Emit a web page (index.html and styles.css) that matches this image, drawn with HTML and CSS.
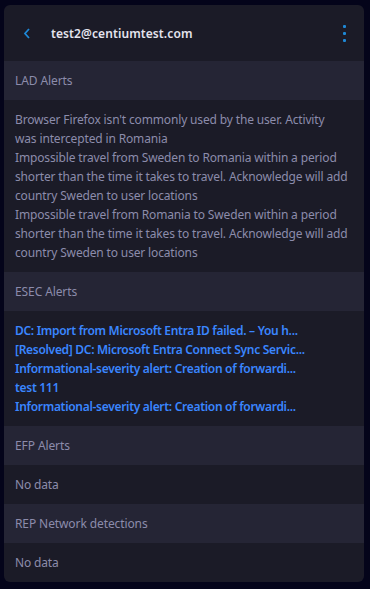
FILE: index.html
```html
<!DOCTYPE html>
<html lang="en">
<head>
  <meta charset="UTF-8">
  <title>test2@centiumtest.com</title>
  <meta name="viewport" content="width=device-width, initial-scale=1.0">
  <link rel="stylesheet" href="styles.css">
</head>
<body>
  <div class="painel">
    <header class="topo">
      <button class="voltar" aria-label="Back">
        <svg width="8" height="11" viewBox="0 0 8 11"><path d="M6 1 L2 5.5 L6 10" fill="none" stroke="#1e88d6" stroke-width="1.8"/></svg>
      </button>
      <h1>test2@centiumtest.com</h1>
      <button class="mais" aria-label="More">
        <span></span><span></span><span></span>
      </button>
    </header>

    <section class="secao">
      <h2>LAD Alerts</h2>
      <div class="conteudo">
        <p>Browser Firefox isn't commonly used by the user. Activity was intercepted in Romania</p>
        <p>Impossible travel from Sweden to Romania within a period shorter than the time it takes to travel. Acknowledge will add country Sweden to user locations</p>
        <p>Impossible travel from Romania to Sweden within a period shorter than the time it takes to travel. Acknowledge will add country Sweden to user locations</p>
      </div>
    </section>

    <section class="secao">
      <h2>ESEC Alerts</h2>
      <div class="conteudo">
        <a href="#">DC: Import from Microsoft Entra ID failed. – You h...</a>
        <a href="#">[Resolved] DC: Microsoft Entra Connect Sync Servic...</a>
        <a href="#">Informational-severity alert: Creation of forwardi...</a>
        <a href="#">test 111</a>
        <a href="#">Informational-severity alert: Creation of forwardi...</a>
      </div>
    </section>

    <section class="secao">
      <h2>EFP Alerts</h2>
      <div class="conteudo"><p>No data</p></div>
    </section>

    <section class="secao">
      <h2>REP Network detections</h2>
      <div class="conteudo"><p>No data</p></div>
    </section>
  </div>
</body>
</html>
```

FILE: styles.css
```css
:root {
  --fundo: #04041a;
  --painel: #1b1b27;
  --cabecalho: #252535;
  --texto: #8c8cab;
  --titulo: #e4e4ee;
  --link: #3a86ff;
  --azul: #1e88d6;
}
* { box-sizing: border-box; margin: 0; padding: 0; font-family: "Noto Sans", "Open Sans", sans-serif; }
body { background: var(--fundo); }
.painel { width: 360px; margin: 5px 0 0 4px; background: var(--painel); border-radius: 6px; overflow: hidden; }
.topo { height: 56px; display: flex; align-items: center; padding: 0 18px 0 19px; }
.topo h1 { flex: 1; font-size: 12px; font-weight: 600; color: var(--titulo); margin-left: 20px; letter-spacing: 0.1px; }
.voltar, .mais { background: none; border: none; cursor: pointer; display: flex; }
.voltar { width: 8px; height: 11px; }
.mais { flex-direction: column; gap: 4px; padding: 2px 0; }
.mais span { width: 3px; height: 3px; background: var(--azul); border-radius: 1px; }
.secao h2 { height: 39px; display: flex; align-items: center; padding: 0 11px; background: var(--cabecalho); font-size: 12px; font-weight: 400; color: var(--texto); letter-spacing: -0.1px; }
.conteudo { padding: 10px 16px 10px 11px; font-size: 12px; line-height: 19px; color: var(--texto); letter-spacing: -0.15px; }
.conteudo a { display: block; color: var(--link); font-weight: 600; text-decoration: none; white-space: nowrap; letter-spacing: -0.3px; }
```
